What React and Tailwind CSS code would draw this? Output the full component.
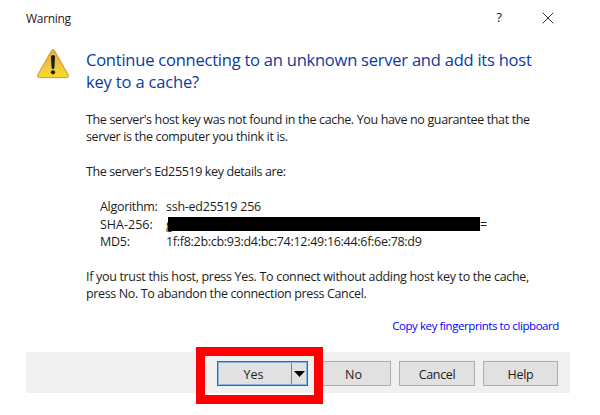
import React from "react";

function WarningIcon() {
  return (
    <svg className="block h-[30px] w-[34px]" viewBox="0 0 34 30">
      <defs>
        <linearGradient id="amber" x1="0" y1="0" x2="0" y2="1">
          <stop offset="0" stopColor="#dfae45" />
          <stop offset="0.55" stopColor="#eec445" />
          <stop offset="1" stopColor="#fcdc22" />
        </linearGradient>
      </defs>
      <path d="M15.3 1.8Q17 -0.6 18.7 1.8L32.2 25.8Q33.2 28.4 30.8 28.6H3.2Q0.8 28.4 1.8 25.8Z" fill="url(#amber)" stroke="#c9982e" strokeWidth="1" />
      <path d="M15 7.8Q15 6 17 6T19 7.8L18.4 19Q18.3 20 17 20T15.6 19Z" fill="#1c1c1c" />
      <circle cx="17" cy="23.3" r="2.1" fill="#1c1c1c" />
    </svg>
  );
}

function Button({ children, className }) {
  return (
    <button className={`flex h-[25px] items-center justify-center border border-[#adadad] bg-[#e1e1e1] pt-[3px] ${className}`}>
      {children}
    </button>
  );
}

export default function App() {
  return (
    <div className="h-[415px] w-[600px] overflow-hidden bg-white font-['Open_Sans','Noto_Sans',sans-serif] text-[12.5px] leading-[17.5px] whitespace-nowrap text-[#1c1c1c]">
      <header className="flex h-[36px] items-center pl-[26px] pr-[46px]">
        <span className="pt-px text-[12px] tracking-[-0.3px]">Warning</span>
        <span className="ml-auto mr-[40px] text-[13.5px]">?</span>
        <svg className="h-[12px] w-[12px]" viewBox="0 0 12 12" stroke="#333" strokeWidth="1">
          <path d="M0.7 0.7L11.3 11.3M11.3 0.7L0.7 11.3" />
        </svg>
      </header>
      <main className="flex h-[316px] pl-[36px] pt-[13px]">
        <WarningIcon />
        <div className="ml-[16px] w-[473px]">
          <h1 className="text-[16.5px] leading-[22px] text-[#0b3a9f]">
            <div className="tracking-[-0.225px]">Continue connecting to an unknown server and add its host</div>
            <div className="tracking-[-0.17px]">key to a cache?</div>
          </h1>
          <div className="pt-[17.5px]">
            <p className="tracking-[-0.355px]">The server's host key was not found in the cache. You have no guarantee that the</p>
            <p className="tracking-[-0.35px]">server is the computer you think it is.</p>
            <p className="pt-[17.5px] tracking-[-0.38px]">The server's Ed25519 key details are:</p>
          </div>
          <dl className="grid grid-cols-[66px_1fr] pl-[14px] pt-[17.5px] tracking-[-0.25px]">
            <dt className="tracking-[-0.3px]">Algorithm:</dt>
            <dd>ssh-ed25519 256</dd>
            <dt className="tracking-[0px]">SHA-256:</dt>
            <dd className="flex items-center">
              <span className="w-[2px]">g</span>
              <span className="z-10 h-[14px] w-[312px] bg-black" />
              <span>=</span>
            </dd>
            <dt>MD5:</dt>
            <dd className="tracking-[-0.29px]">1f:f8:2b:cb:93:d4:bc:74:12:49:16:44:6f:6e:78:d9</dd>
          </dl>
          <div className="pt-[17px]">
            <p className="tracking-[-0.315px]">If you trust this host, press Yes. To connect without adding host key to the cache,</p>
            <p className="tracking-[-0.37px]">press No. To abandon the connection press Cancel.</p>
          </div>
          <a className="mt-[14px] block text-right text-[11.5px] tracking-[-0.42px] text-[#0000ff]">Copy key fingerprints to clipboard</a>
        </div>
      </main>
      <footer className="ml-[26px] flex h-[41px] w-[544px] items-start bg-[#f0f0f0] pt-[9px]">
        <div className="-mt-[14px] ml-[170px] flex h-[57px] w-[127px] shrink-0 items-start border-[9px] border-[#ff0000] pl-[12px] pt-[5px]">
          <button className="flex h-[25px] w-[91px] items-center border border-[#0078d7] bg-[#e1e1e1] outline outline-1 -outline-offset-2 outline-[#0078d7]/40">
            <span className="w-[73px] pr-[2px] pt-[3px] text-center">Yes</span>
            <span className="h-[21px] w-px bg-[#808080]" />
            <svg className="ml-[2px] h-[6px] w-[11px]" viewBox="0 0 11 6"><path d="M0 0H11L5.5 6Z" /></svg>
          </button>
        </div>
        <Button className="w-[68px] border-l-0 pr-[6px]">No</Button>
        <Button className="ml-[8px] w-[76px] tracking-[-0.35px]">Cancel</Button>
        <Button className="ml-[8px] w-[75px] tracking-[-0.3px]">Help</Button>
      </footer>
    </div>
  );
}
